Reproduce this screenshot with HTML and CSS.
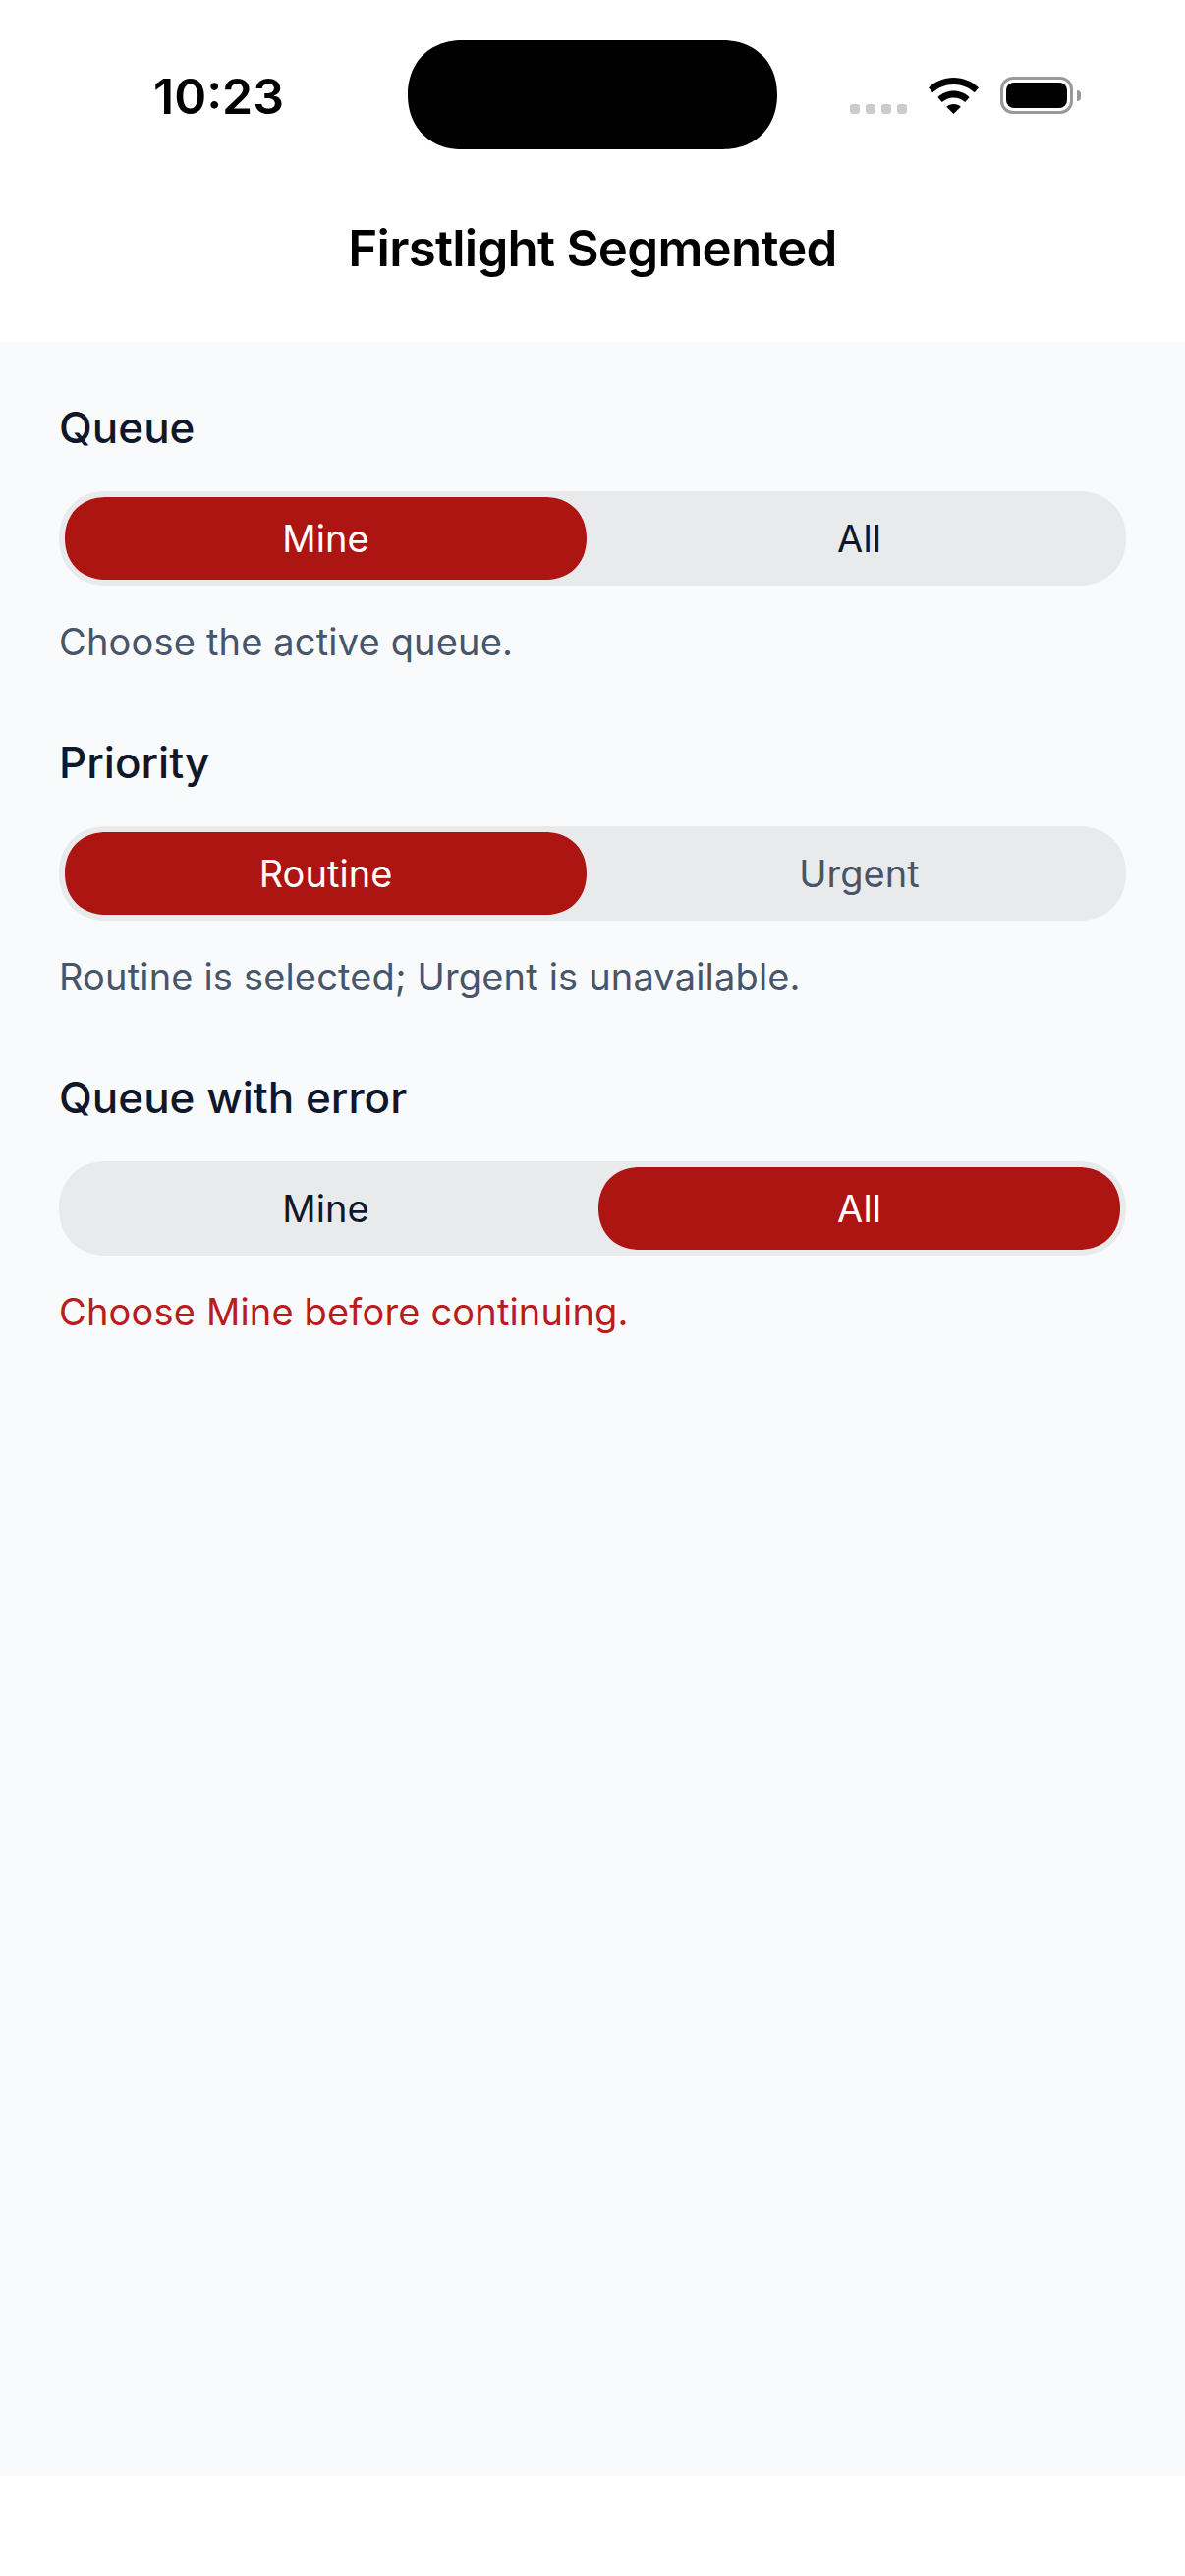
FILE: index.html
```html
<!DOCTYPE html>
<html lang="en">
<head>
<meta charset="utf-8">
<title>Firstlight Segmented</title>
<link rel="stylesheet" href="styles.css">
</head>
<body>
<div class="screen">
  <header class="top">
    <div class="status">
      <span class="time">10:23</span>
      <div class="island"></div>
      <div class="status-icons">
        <div class="dots"><i></i><i></i><i></i><i></i></div>
        <svg class="wifi" width="51" height="37" viewBox="0 0 51 37"><path d="M25.5 0C35 0 44 3.7 51 10.2L46.8 15.3C41 10 33.6 7 25.5 7S10 10 4.2 15.3L0 10.2C7 3.7 16 0 25.5 0Z"/><path d="M25.5 13.5C31.5 13.5 37.2 15.8 41.6 20L37.3 25C34.2 22.1 30 20.4 25.5 20.4S16.8 22.1 13.7 25L9.4 20C13.8 15.8 19.5 13.5 25.5 13.5Z"/><path d="M25.5 27C28.2 27 30.8 28 32.8 29.8L25.5 37L18.2 29.8C20.2 28 22.8 27 25.5 27Z"/></svg>
        <div class="battery"><div class="battery-body"><div class="battery-fill"></div></div><div class="battery-cap"></div></div>
      </div>
    </div>
    <h1 class="nav-title">Firstlight Segmented</h1>
  </header>
  <main class="content">
    <section class="group">
      <div class="label">Queue</div>
      <div class="track">
        <div class="seg seg-on">Mine</div>
        <div class="seg">All</div>
      </div>
      <p class="hint">Choose the active queue.</p>
    </section>
    <section class="group">
      <div class="label">Priority</div>
      <div class="track">
        <div class="seg seg-on">Routine</div>
        <div class="seg seg-off">Urgent</div>
      </div>
      <p class="hint">Routine is selected; Urgent is unavailable.</p>
    </section>
    <section class="group">
      <div class="label">Queue with error</div>
      <div class="track">
        <div class="seg">Mine</div>
        <div class="seg seg-on">All</div>
      </div>
      <p class="hint hint-error">Choose Mine before continuing.</p>
    </section>
  </main>
</div>
</body>
</html>
```
FILE: styles.css
```css
* { box-sizing: border-box; }
html, body { margin: 0; padding: 0; background: #fff; }
body { font-family: Inter, "Liberation Sans", sans-serif; font-variation-settings: "opsz" 14; }
.screen { width: 1206px; height: 2622px; display: flex; flex-direction: column; }
.top { height: 348px; background: #fff; display: flex; flex-direction: column; }
.status { height: 180px; padding: 41px 106px 0 156px; display: flex; align-items: flex-start; position: relative; }
.time { font-size: 50px; font-weight: 600; line-height: 60px; margin-top: 27px; color: #000; letter-spacing: 0; }
.island { position: absolute; left: 415px; top: 41px; width: 376px; height: 111px; border-radius: 56px; corner-shape: superellipse(1.1); background: #000; }
.status-icons { margin-left: auto; display: flex; align-items: flex-end; margin-top: 37px; height: 38px; }
.dots { display: flex; gap: 6px; margin-right: 22px; }
.dots i { display: block; width: 10px; height: 10px; border-radius: 3px; background: #ccc; }
.wifi { fill: #000; display: block; margin-right: 22px; }
.battery { display: flex; align-items: center; height: 38px; }
.battery-body { width: 74px; height: 38px; border: 3px solid #999; border-radius: 13px; padding: 3px; }
.battery-fill { width: 100%; height: 100%; border-radius: 8px; background: #000; }
.battery-cap { width: 4px; height: 11px; margin-left: 4px; border-radius: 0 4px 4px 0; background: #999; }
.nav-title { margin: 42px 0 0; text-align: center; font-size: 51px; font-weight: 600; line-height: 62px; color: #000; letter-spacing: -0.75px; }
.content { height: 2172px; background: #f9fafc; padding: 60px 60px 0; display: flex; flex-direction: column; gap: 67px; }
.group { display: flex; flex-direction: column; }
.label { height: 54px; line-height: 54px; font-size: 44px; font-weight: 500; color: #0f172a; margin-bottom: 38px; }
.track { height: 96px; padding: 6px; border-radius: 48px; corner-shape: superellipse(1.1); background: #e9eaec; display: flex; gap: 12px; }
.seg { flex: 1; height: 84px; border-radius: 42px; corner-shape: superellipse(1.1); display: flex; align-items: center; justify-content: center; font-size: 38px; font-weight: 380; letter-spacing: 0.05px; color: #0f172a; }
.seg-on { background: #ad1513; color: #fff; }
.seg-off { color: #475569; }
.hint { margin: 28px 0 0; height: 58px; line-height: 58px; font-size: 38px; font-weight: 380; letter-spacing: 0.17px; color: #475569; }
.hint-error { color: #b91c1c; }
```
